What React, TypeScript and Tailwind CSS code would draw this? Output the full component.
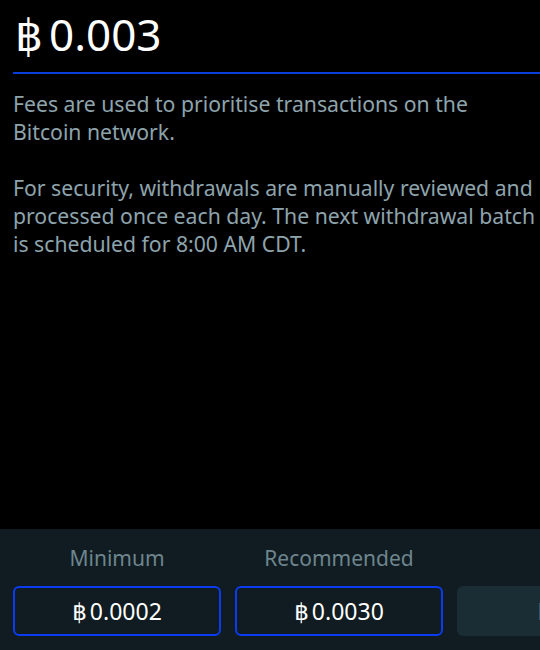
import React from "react";

const fees = [
  { label: "Minimum", value: "0.0002", active: true },
  { label: "Recommended", value: "0.0030", active: true },
  { label: "", value: "Max", active: false },
];

export default function App() {
  return (
    <div
      className="h-[650px] w-[540px] overflow-hidden bg-black flex flex-col"
      style={{ fontFamily: '"Noto Sans", "DejaVu Sans", sans-serif' }}
    >
      <div className="flex-1 pl-[13px]">
        <div className="pl-[2px] pt-[8px] text-[44px] leading-[52px] text-white flex items-baseline">
          <span>฿</span>
          <span className="ml-[6px]">0.003</span>
        </div>
        <div className="mt-[12px] h-[2px] bg-[#0b3ed8] -mr-4"></div>
        <div className="pr-1 pt-[16px] text-[21.2px] leading-[28px] text-[#8ea4ad]">
          <p>
            Fees are used to prioritise transactions on the
            <br />
            Bitcoin network.
          </p>
          <p className="mt-[28px]">
            For security, withdrawals are manually reviewed and processed once each day. The next
            withdrawal batch is scheduled for 8:00 AM CDT.
          </p>
        </div>
      </div>
      <div className="h-[121px] bg-[#101c21] pl-[13px] pt-[16px]">
        <div className="flex gap-[14px] w-[700px]">
          {fees.map((f, i) => (
            <div key={i} className="w-[208px] shrink-0 flex flex-col items-center">
              <div className="h-[26px] text-[21px] leading-[26px] text-[#6e858e]">{f.label}</div>
              <div
                className={
                  "mt-[15px] h-[50px] w-full rounded-[6px] flex items-center justify-center " +
                  (f.active
                    ? "border-2 border-[#0b3cf2] text-white text-[23px]"
                    : "bg-[#1a2d34] text-[#4c6873] text-[24px]")
                }
              >
                {f.active ? (
                  <>
                    <span>฿</span>
                    <span className="ml-[3px]">{f.value}</span>
                  </>
                ) : (
                  f.value
                )}
              </div>
            </div>
          ))}
        </div>
      </div>
    </div>
  );
}
